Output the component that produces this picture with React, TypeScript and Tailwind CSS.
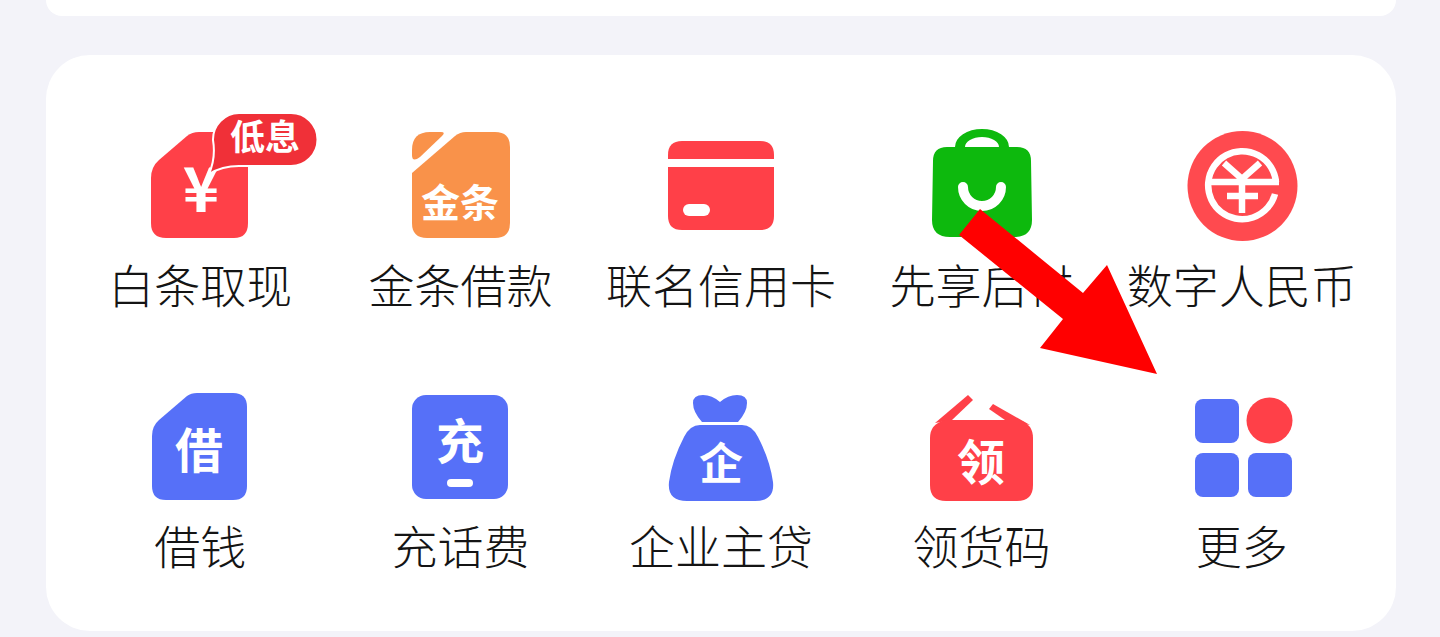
import type { ReactNode } from "react";

const RED = "#FF4048";
const BLUE = "#5670F8";

type Entry = { label: string; cx: number; top: number; art: ReactNode };

const iconText = (x: number, y: number, size: number, text: string) => (
	<text x={x} y={y} fontSize={size} fill="#fff" textAnchor="middle" className="font-bold">
		{text}
	</text>
);

// cx is the column centre on the page, so the drawings below use page coordinates
const entries: Entry[] = [
	{
		label: "白条取现",
		cx: 200,
		top: 110,
		art: (
			<>
				<path
					d="M151 178Q151 167 159 160L187 136Q192 132 199 132H234Q248 132 248 146V223Q248 238 234 238H166Q151 238 151 223Z"
					fill={RED}
				/>
				{iconText(201, 212, 62, "¥")}
				<path
					d="M239 113H291a26.5 26.5 0 0 1 0 53H239Q222 166 209 174Q216 158 213 140A26.5 26.5 0 0 1 239 113Z"
					fill="#F03038"
					stroke="#fff"
					strokeWidth="2"
				/>
				{iconText(265, 150, 35, "低息")}
			</>
		),
	},
	{
		label: "金条借款",
		cx: 461,
		top: 110,
		art: (
			<>
				<path d="M412 150Q412 132 430 132H441Q446 132 442 136L420 157Q412 163 412 155Z" fill="#F9924A" />
				<path
					d="M412 173L455 136Q460 132 466 132H495Q510 132 510 147V223Q510 238 495 238H427Q412 238 412 223Z"
					fill="#F9924A"
				/>
				{iconText(460, 217, 39, "金条")}
			</>
		),
	},
	{
		label: "联名信用卡",
		cx: 721,
		top: 110,
		art: (
			<>
				<path d="M668 159V155Q668 141 682 141H760Q774 141 774 155V159Z" fill={RED} />
				<path d="M668 167H774V216Q774 230 760 230H682Q668 230 668 216Z" fill={RED} />
				<rect x="683" y="204" width="27" height="12" rx="6" fill="#fff" />
			</>
		),
	},
	{
		label: "先享后付",
		cx: 981,
		top: 110,
		art: (
			<>
				<path d="M955 147A27 18 0 0 1 1009 147H999A17 10 0 0 0 965 147Z" fill="#0DB90D" />
				<path
					d="M947 147H1017Q1031 147 1031 161L1032 220Q1032 237 1014 237H950Q932 237 932 220L933 161Q933 147 947 147Z"
					fill="#0DB90D"
				/>
				<path d="M963 187A19 19 0 0 0 1001 187" fill="none" stroke="#fff" strokeWidth="10" strokeLinecap="round" />
			</>
		),
	},
	{
		label: "数字人民币",
		cx: 1242,
		top: 110,
		art: (
			<>
				<circle cx="1242.5" cy="186" r="55" fill="#FF4A4F" />
				<g fill="none" stroke="#fff" strokeWidth="6.5">
					<path d="M1276 182A34 34 0 1 0 1275 194" />
					<path d="M1206 182H1279M1227 196H1258M1242 178V213M1224 163L1242 179L1260 163" />
				</g>
			</>
		),
	},
	{
		label: "借钱",
		cx: 200,
		top: 371,
		art: (
			<>
				<path
					d="M152 436Q152 426 159 420L187 396Q191 393 197 393H233Q247 393 247 407V486Q247 500 233 500H166Q152 500 152 486Z"
					fill={BLUE}
				/>
				{iconText(199, 468, 48, "借")}
			</>
		),
	},
	{
		label: "充话费",
		cx: 461,
		top: 371,
		art: (
			<>
				<rect x="412" y="395" width="96" height="104" rx="14" fill={BLUE} />
				{iconText(460, 459, 48, "充")}
				<rect x="447" y="479" width="26" height="8" rx="4" fill="#fff" />
			</>
		),
	},
	{
		label: "企业主贷",
		cx: 721,
		top: 371,
		art: (
			<>
				<path
					d="M693 403Q693 395 703 395Q712 395 720 402Q728 395 737 395Q747 395 747 403Q747 412 738 422H702Q693 412 693 403Z"
					fill={BLUE}
				/>
				<path
					d="M700 425H742Q752 425 758 437Q770 460 773 482Q775 501 755 501H687Q667 501 669 482Q672 460 684 437Q690 425 700 425Z"
					fill={BLUE}
				/>
				{iconText(721, 480, 44, "企")}
			</>
		),
	},
	{
		label: "领货码",
		cx: 981,
		top: 371,
		art: (
			<>
				<path d="M968 395L973 400L952 420L935 423Z" fill={RED} />
				<path d="M993 404L1030 425L1005 420L989 409Z" fill={RED} />
				<path d="M945 420H1019Q1033 424 1033 438V485Q1033 501 1017 501H946Q930 501 930 485V438Q930 424 945 420Z" fill={RED} />
				{iconText(981, 480, 48, "领")}
			</>
		),
	},
	{
		label: "更多",
		cx: 1242,
		top: 371,
		art: (
			<>
				<rect x="1195" y="399" width="44" height="44" rx="8" fill={BLUE} />
				<circle cx="1269.5" cy="420.5" r="23" fill={RED} />
				<rect x="1195" y="453" width="44" height="44" rx="8" fill={BLUE} />
				<rect x="1248" y="453" width="44" height="44" rx="8" fill={BLUE} />
			</>
		),
	},
];

function App() {
	return (
		<div className="relative h-[637px] w-[1440px] overflow-hidden bg-[#f3f3f9] font-['Noto_Sans_CJK_SC',sans-serif]">
			<div className="ml-[46px] mr-[44px] h-[16px] rounded-b-[44px] bg-white" />

			<main className="ml-[46px] mr-[44px] mt-[39px] h-[576px] rounded-[44px] bg-white px-[24px] pt-[55px]">
				<div className="grid grid-cols-5 gap-y-[63px]">
					{entries.map((item) => (
						<div key={item.label} className="flex flex-col items-center">
							<svg
								width="240"
								height="132"
								viewBox={`${item.cx - 120} ${item.top} 240 132`}
								className="block"
							>
								{item.art}
							</svg>
							<span className="mt-[16px] whitespace-nowrap text-[46px] font-light leading-[50px] text-[#141414]">
								{item.label}
							</span>
						</div>
					))}
				</div>
			</main>

			{/* Annotation arrow on top of the card */}
			<svg width="1440" height="637" className="pointer-events-none absolute left-0 top-0">
				<polygon
					points="980,209 1083,293 1107,265 1157,374 1040,348 1063,319 959,235"
					fill="#FF0000"
				/>
			</svg>
		</div>
	);
}

export default App;
